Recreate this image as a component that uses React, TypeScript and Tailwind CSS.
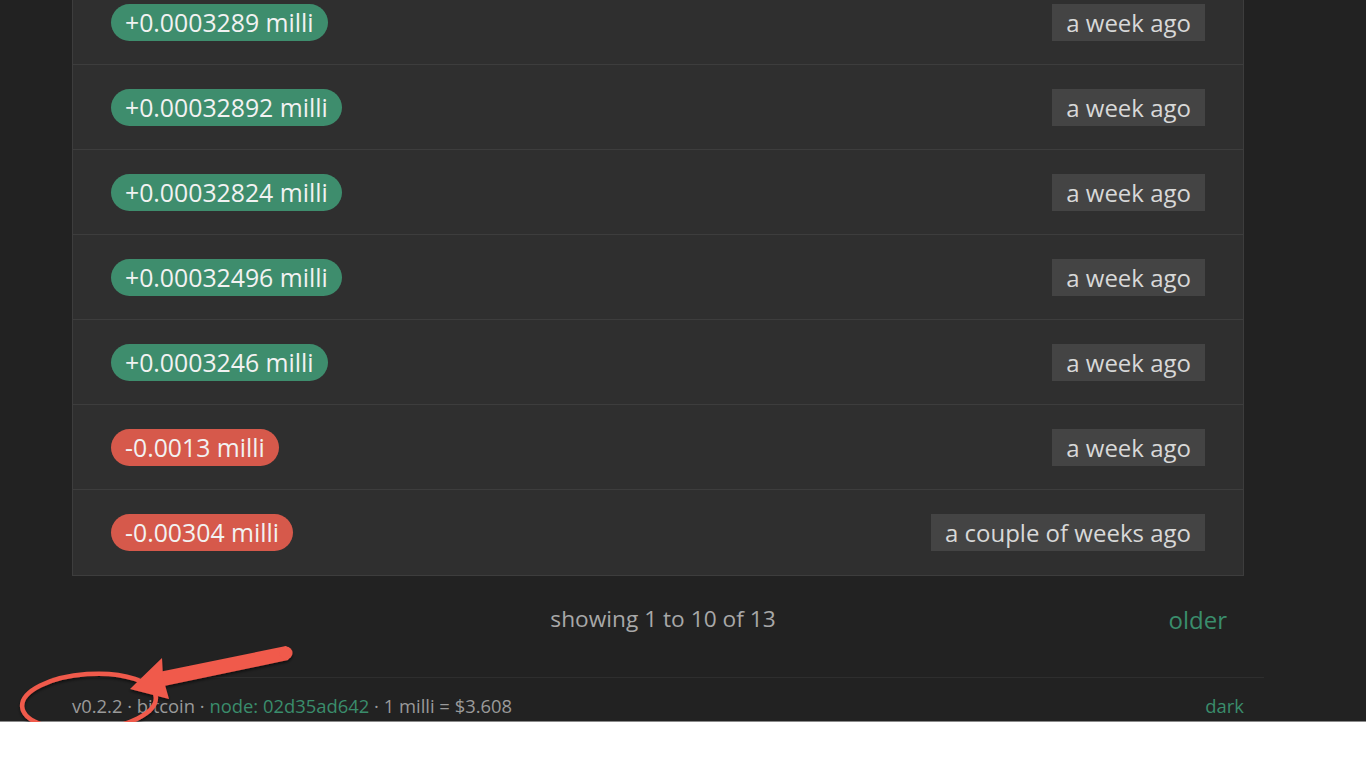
import React from "react";

const rows: { amount: string; pos: boolean; time: string }[] = [
  { amount: "+0.0003289 milli", pos: true, time: "a week ago" },
  { amount: "+0.00032892 milli", pos: true, time: "a week ago" },
  { amount: "+0.00032824 milli", pos: true, time: "a week ago" },
  { amount: "+0.00032496 milli", pos: true, time: "a week ago" },
  { amount: "+0.0003246 milli", pos: true, time: "a week ago" },
  { amount: "-0.0013 milli", pos: false, time: "a week ago" },
  { amount: "-0.00304 milli", pos: false, time: "a couple of weeks ago" },
];

export default function App() {
  return (
    <div className="relative" style={{ fontFamily: "'Open Sans', 'Noto Sans', sans-serif" }}>
      <div className="h-[722px] overflow-hidden bg-[#222222] border-b border-[#8a8a8a]">
        <div className="mx-[72px] w-[1172px]">
          <div className="-mt-[21px] border border-[#3d3d3d] bg-[#2f2f2f] divide-y divide-[#3d3d3d]">
            {rows.map((r, i) => (
              <div key={i} className="h-[85px] flex items-center justify-between pl-[38px] pr-[38px]">
                <span
                  className={
                    "h-[37px] leading-[37px] px-[14px] rounded-full text-[24.8px] text-[#f2f2f2] " +
                    (r.pos ? "bg-[#3e8d6d]" : "bg-[#d6594b]")
                  }
                >
                  {r.amount}
                </span>
                <span className="h-[37px] leading-[37px] px-[14px] bg-[#444444] text-[24px] text-[#d8d8d8]">
                  {r.time}
                </span>
              </div>
            ))}
          </div>
          <div className="h-[101px] grid grid-cols-3 items-start pt-[29px]">
            <div />
            <div className="text-center text-[22.7px] leading-[28px] text-[#a8a8a8] pl-[10px] whitespace-nowrap">showing 1 to 10 of 13</div>
            <div className="text-right pr-[17px] text-[24px] leading-[30px] text-[#3a8d6c]">older</div>
          </div>
          <div className="-mx-[20px] border-t border-[#2e2e2e]" />
          <div className="flex justify-between pt-[16px] text-[18.4px] leading-[24px]">
            <div className="text-[#9a9a9a] whitespace-nowrap">
              v0.2.2 · bitcoin · <span className="text-[#3a8d6c]">node: 02d35ad642</span> · 1 milli = $3.608
            </div>
            <div className="text-[#3a8d6c]">dark</div>
          </div>
        </div>
      </div>
      <svg className="absolute left-0 top-0 pointer-events-none" width="320" height="768" viewBox="0 0 320 768">
        <defs>
          <filter id="sh" x="-20%" y="-20%" width="140%" height="140%">
            <feDropShadow dx="0" dy="2" stdDeviation="1.5" floodColor="#000" floodOpacity="0.55" />
          </filter>
        </defs>
        <g filter="url(#sh)">
          <ellipse cx="89" cy="702" rx="67" ry="28" transform="rotate(-4 89 702)" fill="none" stroke="#f05a4c" strokeWidth="4.5" />
          <path d="M286 646 Q293 653 288 660 L164 686 L159 672 Z" fill="#f05a4c" />
          <circle cx="286" cy="653" r="6.5" fill="#f05a4c" />
          <polygon points="130,689 162,658 163,678 169,699" fill="#f05a4c" />
        </g>
      </svg>
    </div>
  );
}
